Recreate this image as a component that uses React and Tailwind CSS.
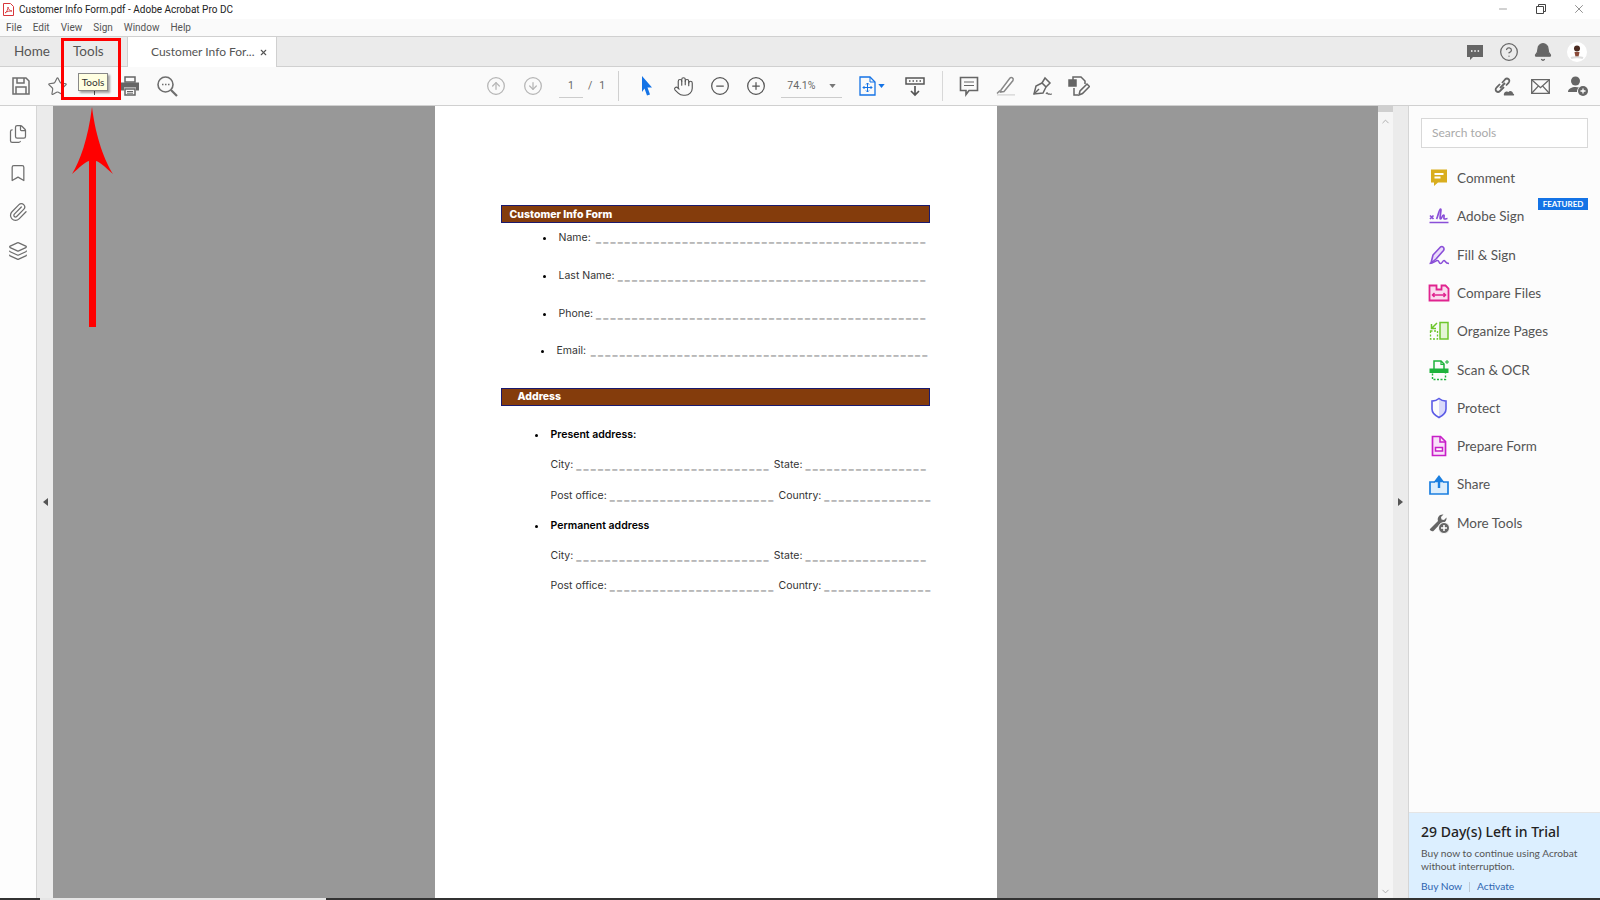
import React from "react";
import {
  Star,
  CircleArrowUp,
  CircleArrowDown,
  Hand,
  CircleMinus,
  CirclePlus,
  CircleHelp,
  Bell,
  Files,
  Bookmark,
  Paperclip,
  Layers,
  Minus,
  X,
  ChevronUp,
  ChevronDown,
} from "lucide-react";

const pdf = "font-['Inter',sans-serif]";

const Dashes = ({ n, className = "" }) => (
  <span
    className={`shrink-0 self-end whitespace-nowrap font-['Liberation_Sans',sans-serif] text-[9px] font-bold leading-[14px] tracking-[2.2px] text-[#444] [text-shadow:0_0.6px_0_#555] ${className}`}
  >
    {"_".repeat(n)}
  </span>
);

const Caret = ({ className }) => (
  <svg width="7" height="4" viewBox="0 0 8 5" className={className}>
    <path d="M0 0h8L4 5z" fill="currentColor" />
  </svg>
);

const ToolIcon = ({ children }) => (
  <svg width="22" height="22" viewBox="0 0 22 22" fill="none" className="shrink-0">
    {children}
  </svg>
);

const tools = [
  {
    name: "Comment",
    icon: (
      <ToolIcon>
        <path d="M3 2.500h16v13h-9l-4 3.500v-3.500H3z" fill="#d9ae1f" />
        <path d="M6.500 7h9M6.500 10.500h6" stroke="#fff" strokeWidth="1.800" />
      </ToolIcon>
    ),
  },
  {
    name: "Adobe Sign",
    icon: (
      <ToolIcon>
        <path d="M2 10.500l3.500 3.500M5.500 10.500L2 14" stroke="#8a4fd8" strokeWidth="1.700" />
        <path d="M8.500 14c1.500-2 2.500-10 4-10s-1.500 10 0 10 1.500-4 3-4-.5 4 1 4 2-.5 3-.5" stroke="#8a4fd8" strokeWidth="1.700" />
        <path d="M1.500 17.500h19" stroke="#8a4fd8" strokeWidth="1.500" />
      </ToolIcon>
    ),
  },
  {
    name: "Fill & Sign",
    icon: (
      <ToolIcon>
        <path d="M3 19L5 11 12.500 3c2-1.500 4.500 1 3 3.500L8 15z" fill="#eadcfb" stroke="#8a4fd8" strokeWidth="1.600" strokeLinejoin="round" />
        <path d="M1.500 19.500c4 0 6-3 8-3s1 3 3 3 2-3 3.500-3 1 3 5 3" stroke="#8a4fd8" strokeWidth="1.500" />
      </ToolIcon>
    ),
  },
  {
    name: "Compare Files",
    icon: (
      <ToolIcon>
        <path d="M1.500 3.500h7v4h5v-4h4l3 3v12h-19z" stroke="#e0248f" strokeWidth="1.800" fill="#fbdcee" />
        <path d="M4.500 13h13M6.500 11l-2 2 2 2M15.500 11l2 2-2 2" stroke="#e0248f" strokeWidth="1.500" />
      </ToolIcon>
    ),
  },
  {
    name: "Organize Pages",
    icon: (
      <ToolIcon>
        <path d="M12 2.500h8v16.500h-8z" stroke="#6dc62c" strokeWidth="1.500" fill="#e4f5d5" />
        <path d="M2.500 11h7v8h-7z" stroke="#6dc62c" strokeWidth="1.300" strokeDasharray="2 1.500" />
        <path d="M9 3L3.500 8.500M3.500 4v4.500H8" stroke="#6dc62c" strokeWidth="1.500" />
      </ToolIcon>
    ),
  },
  {
    name: "Scan & OCR",
    icon: (
      <ToolIcon>
        <path d="M6 10V2h7l3 3v5" stroke="#1eb23c" strokeWidth="1.500" />
        <path d="M13 2v3.500h3" stroke="#1eb23c" strokeWidth="1.200" />
        <path d="M1.500 9.500h19v4.500h-19z" fill="#1eb23c" />
        <path d="M4.500 14.500v6h13v-6" stroke="#1eb23c" strokeWidth="1.400" strokeDasharray="2 1.500" />
        <path d="M19 1v4M17 3h4" stroke="#1eb23c" strokeWidth="1" />
      </ToolIcon>
    ),
  },
  {
    name: "Protect",
    icon: (
      <ToolIcon>
        <path d="M11 2v18c3-1.500 6.500-4 6.500-8V4.600c-2.500 0-5-1-6.500-2.600z" fill="#d9d9fa" />
        <path d="M11 1.500c2 1.800 5 2.600 7 2.600V12c0 4-3.500 6.800-7 8.500-3.500-1.700-7-4.500-7-8.500V4.100c2 0 5-.8 7-2.600z" stroke="#5b5be6" strokeWidth="1.600" />
      </ToolIcon>
    ),
  },
  {
    name: "Prepare Form",
    icon: (
      <ToolIcon>
        <path d="M4.500 1.500h8l5 5v14h-13z" stroke="#c81fc8" strokeWidth="1.700" fill="#f9e3f9" />
        <path d="M12 2v5h5" stroke="#c81fc8" strokeWidth="1.500" />
        <path d="M7.500 12.500h7v3.500h-7z" stroke="#c81fc8" strokeWidth="1.500" fill="#fff" />
      </ToolIcon>
    ),
  },
  {
    name: "Share",
    icon: (
      <ToolIcon>
        <path d="M7 8H2v12h18V8h-5" stroke="#1b7fe0" strokeWidth="1.700" fill="#ddeefc" />
        <path d="M11 14V4M8 7l3-4 3 4z" stroke="#1b7fe0" strokeWidth="2.400" fill="#1b7fe0" />
      </ToolIcon>
    ),
  },
  {
    name: "More Tools",
    icon: (
      <ToolIcon>
        <path d="M2 17L10 9c-1-3 1-7 5.500-6.500L13 5l.5 2.500L16 8l2.500-2.500C19 9 16 11.500 13 11l-7.500 8c-1 1-4.500-1-3.500-2z" fill="#666" />
        <circle cx="16" cy="16" r="5.500" fill="#666" stroke="#fcfcfc" />
        <path d="M13 16h6M16 13v6" stroke="#fff" strokeWidth="1.500" />
      </ToolIcon>
    ),
  },
];

const Menu = ["File", "Edit", "View", "Sign", "Window", "Help"];

const Slot = ({ children, className = "" }) => (
  <div className={`flex h-full w-[37px] shrink-0 items-center justify-center text-[#6e6e6e] ${className}`}>
    {children}
  </div>
);

const Row = ({ className, children }) => (
  <div className={`flex h-4 items-center whitespace-nowrap text-[10.5px] text-[#333] ${className}`}>{children}</div>
);

const Bullet = ({ className }) => <span className={`absolute h-[3px] w-[3px] rounded-full bg-black ${className}`} />;

// City / State and Post office / Country lines repeat, so they share this
const CityRow = ({ className }) => (
  <Row className={`pl-[50px] ${className}`}>
    <span className="mr-[3px]">City:</span>
    <Dashes n={27} />
    <span className="mx-[3px]">State:</span>
    <Dashes n={17} className="ml-auto mr-[2px]" />
  </Row>
);

const PostRow = ({ className }) => (
  <Row className={`pl-[50px] ${className}`}>
    <span className="mr-[3px]">Post office:</span>
    <Dashes n={23} />
    <span className="mx-[3px]">Country:</span>
    <Dashes n={15} className="ml-auto" />
  </Row>
);

export default function App() {
  return (
    <div className="relative flex h-[900px] w-[1600px] flex-col overflow-hidden bg-white font-['Lato',sans-serif]">
      {/* title bar */}
      <div className="flex h-[19px] shrink-0 items-center bg-white pl-[3px] font-['Roboto',sans-serif] text-[10px] text-[#222]">
        <svg width="11" height="13" viewBox="0 0 11 13" className="mr-[5px]">
          <path d="M.5.5h7l3 3v9H.5z" fill="#fff" stroke="#d8363a" />
          <path d="M2 10c2-1 3-4 3-6 0 2 2 4 4 4-2 0-5 0-7 2z" fill="none" stroke="#d8363a" strokeWidth="0.900" />
        </svg>
        <span>Customer Info Form.pdf - Adobe Acrobat Pro DC</span>
        <div className="mb-[2px] ml-auto flex h-full items-center text-[#444]">
          <Minus size={12} strokeWidth={1} className="mr-[27px]" />
          <svg width="10" height="10" viewBox="0 0 10 10" className="mr-[26px]" fill="none" stroke="currentColor">
            <path d="M.5 2.500h7v7h-7zM2.500 2.500v-2h7v7h-2" />
          </svg>
          <X size={14} strokeWidth={1} className="mr-[14px]" />
        </div>
      </div>

      {/* menu */}
      <div className="flex h-[17px] shrink-0 items-center gap-[11px] bg-[#fafafa] pl-[6px] font-['Roboto',sans-serif] text-[10px] text-[#555]">
        {Menu.map((m) => (
          <span key={m}>{m}</span>
        ))}
      </div>

      {/* tabs */}
      <div className="flex h-[31px] shrink-0 items-stretch border-y border-[#d0d0d0] bg-[#ebebeb] text-[#555]">
        <div className="flex w-[62px] items-center pb-[1px] pl-[14px] text-[13.5px]">Home</div>
        <div className="flex w-[65px] items-center pb-[1px] pl-[11px] text-[13.5px]">Tools</div>
        <div className="mb-[-1px] flex w-[150px] items-center whitespace-nowrap border-x border-[#d0d0d0] bg-white pl-[23px] text-[12px]">
          <span>Customer Info For...</span>
          <X size={9} strokeWidth={3} className="ml-auto mr-[8px]" />
        </div>
        <div className="ml-auto flex items-center gap-[14px] pr-[13px] text-[#666]">
          <svg width="20" height="20" viewBox="0 0 20 20">
            <path d="M2 3h16v12H8l-3 3v-3H2z" fill="currentColor" />
            <path d="M6 9h1.500M9.300 9h1.500M12.600 9h1.500" stroke="#fff" strokeWidth="1.500" />
          </svg>
          <CircleHelp size={20} strokeWidth={1.500} />
          <Bell size={20} fill="currentColor" strokeWidth={1.500} />
          <div className="flex h-5 w-5 items-center justify-center overflow-hidden rounded-full bg-white">
            <svg width="20" height="20" viewBox="0 0 20 20">
              <circle cx="10" cy="6.500" r="3" fill="#4a2a20" />
              <path d="M7.500 10h5l-1 5h-3z" fill="#8a4a38" />
              <path d="M4 16c2-1 10-1 12 0" stroke="#ddd" strokeWidth="2" fill="none" />
            </svg>
          </div>
        </div>
      </div>

      {/* toolbar */}
      <div className="flex h-[39px] shrink-0 items-center border-b border-[#d0d0d0] bg-[#fafafa] pl-[2px] font-['Roboto',sans-serif]">
        <Slot>
          <svg width="20" height="20" viewBox="0 0 20 20" fill="none" stroke="currentColor" strokeWidth="1.500">
            <path d="M2 2h13l3 3v13H2z" />
            <path d="M6 2v5h7V2M5 18v-7h10v7" />
          </svg>
        </Slot>
        <Slot><Star size={21} strokeWidth={1.300} /></Slot>
        <div className="h-full w-[35px] shrink-0" />
        <Slot>
          <svg width="20" height="20" viewBox="0 0 20 20" fill="#666">
            <path d="M5 1h10v5H5z" fill="none" stroke="#666" strokeWidth="1.500" />
            <path d="M1 6.500h18v8h-3v-3H4v3H1z" />
            <path d="M5 13h10v6H5z" fill="none" stroke="#666" strokeWidth="1.500" />
            <path d="M7 15.500h6M7 17.200h6" stroke="#666" />
          </svg>
        </Slot>
        <Slot>
          <svg width="22" height="22" viewBox="0 0 22 22" fill="none" stroke="currentColor" strokeWidth="1.600">
            <circle cx="9.500" cy="9.500" r="7.500" />
            <path d="M15 15l6 6" strokeWidth="2.200" />
            <path d="M6 9.500h1.500M9 9.500h1.500M12 9.500h1.500" />
          </svg>
        </Slot>
        <div className="w-[292px] shrink-0" />
        <Slot className="text-[#b5b5b5]"><CircleArrowUp size={20} strokeWidth={1.500} /></Slot>
        <Slot className="text-[#b5b5b5]"><CircleArrowDown size={20} strokeWidth={1.500} /></Slot>
        <div className="ml-[8px] flex h-[24px] w-[24px] shrink-0 items-center justify-center border-b border-[#ccc] text-[10.5px] text-[#666]">1</div>
        <span className="ml-[5px] text-[10.5px] text-[#666]">/</span>
        <span className="ml-[7px] text-[10.5px] text-[#666]">1</span>
        <div className="ml-[13px] h-[30px] w-px bg-[#d0d0d0]" />
        <div className="w-[9px] shrink-0" />
        <Slot>
          <svg width="20" height="22" viewBox="0 0 20 22">
            <path d="M5 1l10 11.500h-4.500l2.500 7-3 1-2.500-7L5 17z" fill="#1473e6" />
          </svg>
        </Slot>
        <Slot className="text-[#555]"><Hand size={21} strokeWidth={1.300} /></Slot>
        <Slot className="ml-[-1px]"><CircleMinus size={20} strokeWidth={1.500} className="text-[#555]" /></Slot>
        <Slot className="ml-[-1px]"><CirclePlus size={20} strokeWidth={1.500} className="text-[#555]" /></Slot>
        <div className="ml-[7px] flex h-[24px] w-[61px] shrink-0 items-center justify-between border-b border-[#ccc] px-[6px] text-[10.5px] text-[#666]">
          <span>74.1%</span>
          <Caret className="text-[#777]" />
        </div>
        <div className="ml-[17px] flex w-[26px] shrink-0 items-center justify-between text-[#1473e6]">
          <svg width="17" height="20" viewBox="0 0 17 20" fill="none" stroke="currentColor">
            <path d="M1 1h10l5 5v13H1z" strokeWidth="1.300" />
            <path d="M11 1v5h5" strokeWidth="1" />
            <path d="M8.500 7v9M4 11.500h9M7 8.500L8.500 7 10 8.500M7 14.500L8.500 16l1.500-1.500M5.500 10L4 11.500 5.500 13M11.500 10l1.500 1.500-1.500 1.500" strokeWidth="1" />
          </svg>
          <Caret />
        </div>
        <Slot className="ml-[11px] text-[#555]">
          <svg width="20" height="22" viewBox="0 0 20 22" fill="none" stroke="currentColor" strokeWidth="1.500">
            <path d="M1 3h18v6H1z" />
            <path d="M4 6h1.500M7.500 6H9M11 6h1.500M14.500 6H16" stroke="#555" />
            <path d="M10 11v9M6 16l4 4 4-4" strokeWidth="1.700" />
          </svg>
        </Slot>
        <div className="ml-[9px] h-[30px] w-px bg-[#d8d8d8]" />
        <div className="w-[7px] shrink-0" />
        <Slot>
          <svg width="20" height="22" viewBox="0 0 20 22" fill="none" stroke="#666" strokeWidth="1.600">
            <path d="M1.500 2.500h17v13h-8.500l-3 4v-4h-5.500z" />
            <path d="M5 7h10M5 10.500h10" strokeWidth="1" />
          </svg>
        </Slot>
        <Slot>
          <svg width="22" height="22" viewBox="0 0 22 22" fill="none">
            <path d="M6 15L15 3c1.500-1.500 4 .5 3 2.500L9 16.500l-3.500.5z" fill="#fff" stroke="#888" strokeWidth="1.500" />
            <path d="M2 19h18v1.700H2z" fill="#ddd" />
            <path d="M2 18.500l3-3" stroke="#888" strokeWidth="1.500" />
          </svg>
        </Slot>
        <Slot>
          <svg width="22" height="22" viewBox="0 0 22 22" fill="none" stroke="#666" strokeWidth="1.500">
            <path d="M2 19l2-8 6-3 4 4-3 6z" />
            <path d="M10 8l3-5 5 5-4 4" />
            <path d="M2 19l5-5" />
            <path d="M14 19c1-2 1.500-1 2 0s1-1 1.500 0 1 0 2.500 0" strokeWidth="1.100" />
          </svg>
        </Slot>
        <Slot className="ml-[-1px]">
          <svg width="22" height="22" viewBox="0 0 22 22" fill="none" stroke="#666" strokeWidth="1.500">
            <path d="M1 5h7v6H1z" fill="#666" />
            <path d="M5 5V2h8l4 4v3M6 13v7h4" />
            <path d="M11 20l1-4 7-7 2.500 2.500-7 7z" />
          </svg>
        </Slot>
        <div className="ml-auto flex h-full items-center pr-[4px]">
          <Slot>
            <svg width="24" height="22" viewBox="0 0 24 22" fill="none" stroke="#666" strokeWidth="1.800">
              <path d="M10 8l3-3.500c2.500-2.500 6 .8 3.500 3.300L14 10.500M12 12l-4 4c-2.500 2.500-6-.8-3.500-3.300L8 9" />
              <path d="M8 13l5-5" />
              <path d="M12 20.500c-1-3.500 3-5 4.500-3.500 1-2 4.500-1 4.500 1.500 1.500.5 1.500 2 .5 2z" fill="#666" stroke="none" />
            </svg>
          </Slot>
          <Slot>
            <svg width="19" height="15" viewBox="0 0 19 15" fill="none" stroke="#666" strokeWidth="1.300">
              <path d="M.7.7h17.600v13.600H.7z" />
              <path d="M.7.7l8.800 8 8.800-8M.7 14.300l6.800-7.400M18.300 14.300l-6.800-7.400" />
            </svg>
          </Slot>
          <Slot>
            <svg width="22" height="22" viewBox="0 0 22 22" fill="#666">
              <circle cx="8.500" cy="6" r="4.500" />
              <path d="M1 17c0-3.500 4-5 7.500-5 1.500 0 2.500.2 3.500.5-1.500 1-2 2.500-2 4.500z" />
              <circle cx="16" cy="16" r="5" />
              <path d="M13.500 16h5M16 13.500v5" stroke="#fff" strokeWidth="1.300" />
            </svg>
          </Slot>
        </div>
      </div>

      {/* main */}
      <div className="flex min-h-0 flex-1">
        <div className="flex w-[37px] shrink-0 flex-col items-center gap-[19px] border-r border-[#d5d5d5] bg-[#fdfdfd] pt-[18px] text-[#6e6e6e]">
          <Files size={20} strokeWidth={1.500} />
          <Bookmark size={20} strokeWidth={1.500} />
          <Paperclip size={20} strokeWidth={1.500} />
          <Layers size={20} strokeWidth={1.500} />
        </div>
        <div className="flex w-[16px] shrink-0 items-center justify-center bg-[#ebebeb] text-[#555]">
          <svg width="5" height="8" viewBox="0 0 5 8"><path d="M5 0v8L0 4z" fill="currentColor" /></svg>
        </div>
        <div className="flex flex-1 justify-center overflow-hidden bg-[#989898]">
          <div className={`h-full w-[562px] shrink-0 bg-white pl-[66px] pr-[67px] pt-[99px] ${pdf}`}>
            <div className="flex h-[18px] items-center border border-[#1a1a6e] bg-[#843c0c] pl-[8px] pt-[1px] text-[10.5px] font-extrabold text-white">
              Customer Info Form
            </div>
            <Row className="relative mt-[7px] pl-[58px] pr-[2px]">
              <Bullet className="left-[42px]" />
              <span className="mr-[3px]">Name:</span>
              <Dashes n={46} className="ml-auto" />
            </Row>
            <Row className="relative mt-[22px] pl-[58px] pr-[2px]">
              <Bullet className="left-[42px]" />
              <span className="mr-[3px]">Last Name:</span>
              <Dashes n={43} className="ml-auto" />
            </Row>
            <Row className="relative mt-[22px] pl-[58px] pr-[2px]">
              <Bullet className="left-[42px]" />
              <span className="mr-[3px]">Phone:</span>
              <Dashes n={46} className="ml-auto" />
            </Row>
            <Row className="relative mt-[21px] pl-[56px]">
              <Bullet className="left-[40px]" />
              <span className="mr-[3px]">Email:</span>
              <Dashes n={47} className="ml-auto" />
            </Row>
            <div className="mt-[29px] flex h-[18px] items-center border border-[#1a1a6e] bg-[#843c0c] pl-[16px] text-[10.5px] font-extrabold text-white">
              Address
            </div>
            <Row className="relative mt-[21px] pl-[50px] font-semibold text-black">
              <Bullet className="left-[34px]" />
              Present address:
            </Row>
            <CityRow className="mt-[14px]" />
            <PostRow className="mt-[15px]" />
            <Row className="relative mt-[14px] pl-[50px] font-semibold text-black">
              <Bullet className="left-[34px]" />
              Permanent address
            </Row>
            <CityRow className="mt-[14px]" />
            <PostRow className="mt-[14px]" />
          </div>
        </div>
        <div className="flex w-[15px] shrink-0 flex-col items-center bg-[#f5f5f5] text-[#aaa]">
          <div className="h-[6px] w-full bg-[#cfcfcf]" />
          <ChevronUp size={11} className="mt-[4px]" />
          <ChevronDown size={11} className="mb-[1px] mt-auto" />
        </div>
        <div className="flex w-[15px] shrink-0 items-center justify-center bg-[#ebebeb] text-[#555]">
          <svg width="5" height="8" viewBox="0 0 5 8"><path d="M0 0v8l5-4z" fill="currentColor" /></svg>
        </div>
        <div className="flex w-[192px] shrink-0 flex-col border-l border-[#d5d5d5] bg-[#fcfcfc]">
          <div className="ml-[12px] mt-[12px] flex h-[30px] w-[167px] shrink-0 items-center border border-[#d8d8d8] bg-white pl-[10px] text-[12px] text-[#aaa]">
            Search tools
          </div>
          <div className="mt-[11px] flex flex-col pl-[19px]">
            {tools.map((t) => (
              <div key={t.name} className="relative flex h-[38.3px] items-center gap-[7px] text-[13.5px] text-[#555]">
                {t.icon}
                <span>{t.name}</span>
                {t.name === "Adobe Sign" && (
                  <span className="absolute right-[12px] top-[1px] flex h-[12px] w-[50px] items-center justify-center bg-[#1473e6] text-[8px] font-bold text-white">
                    FEATURED
                  </span>
                )}
              </div>
            ))}
          </div>
          <div className="mt-auto h-[86px] border-t border-[#e5e5e5] bg-[#dcefff] pl-[12px] pt-[9px]">
            <div className="font-['Noto_Sans',sans-serif] text-[14px] font-medium leading-[20px] text-[#222]">29 Day(s) Left in Trial</div>
            <div className="mt-[5px] text-[10.2px] leading-[12.5px] text-[#555]">
              Buy now to continue using Acrobat
              <br />
              without interruption.
            </div>
            <div className="mt-[8px] flex items-center text-[10.2px] leading-[13px] text-[#2d64b0]">
              <span>Buy Now</span>
              <span className="mx-[7px] h-[10px] w-px bg-[#bcc9d6]" />
              <span>Activate</span>
            </div>
          </div>
        </div>
      </div>

      {/* windows taskbar edge */}
      <div className="flex h-[2px] shrink-0 bg-[#333]">
        <div className="ml-[40px] w-[286px] bg-[#e5e5e5]" />
      </div>

      {/* tutorial annotation over the toolbar */}
      <div className="absolute left-[61px] top-[38px] h-[62px] w-[60px] border-[3px] border-[#f00]" />
      <div className="absolute left-[94px] top-[90px] h-[5px] w-px bg-[#555]" />
      <div className="absolute left-[78px] top-[73px] flex h-[18px] w-[30px] items-center justify-center border border-[#888] bg-[#ffffe1] text-[10px] text-[#333] shadow-[2px_2px_2px_rgba(0,0,0,0.35)]">
        Tools
      </div>
      <svg width="60" height="230" viewBox="0 0 60 230" className="absolute left-[62px] top-[104px]">
        <path d="M30 3c4 32 13 54 21 67-8-7-13-12-17-13v166h-7V57c-4 1-9 6-17 13C18 57 26 35 30 3z" fill="#f00" />
      </svg>
    </div>
  );
}
